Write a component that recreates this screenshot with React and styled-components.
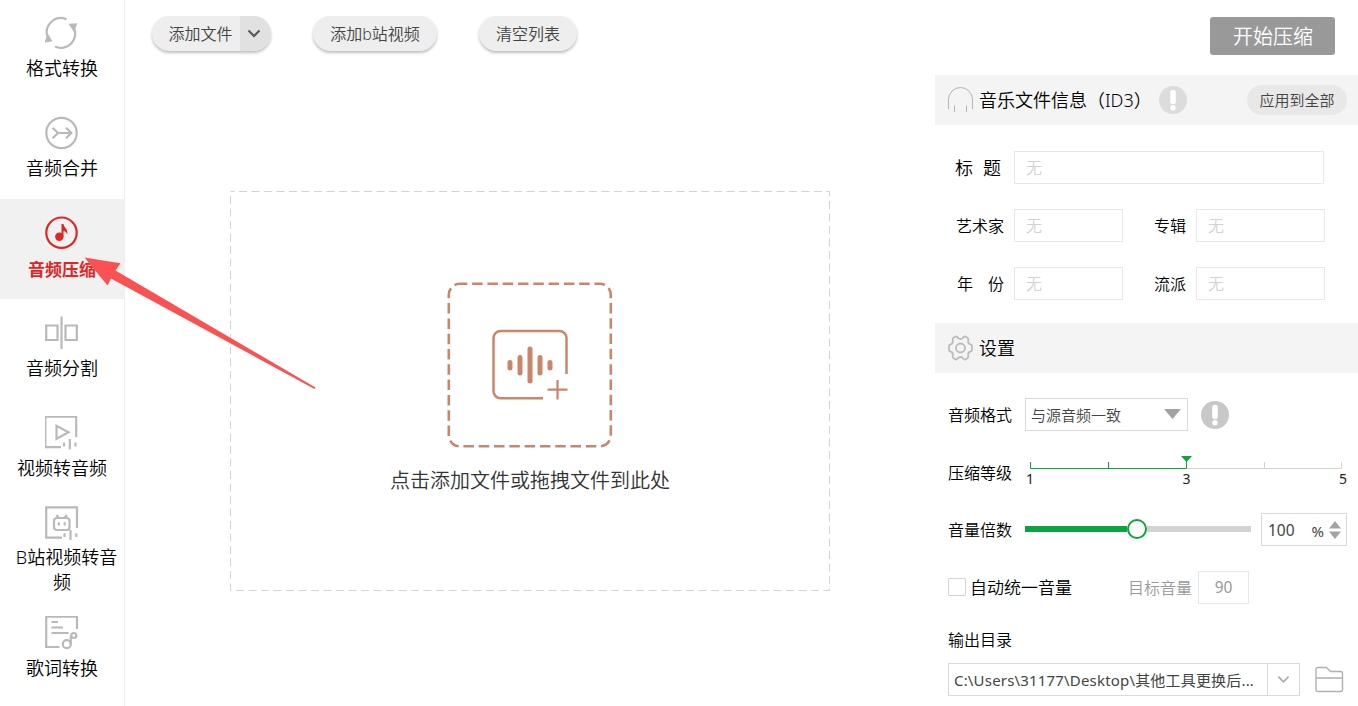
import styled, { createGlobalStyle, css } from "styled-components";

const GlobalStyle = createGlobalStyle`
  * {
    box-sizing: border-box;
  }

  body {
    margin: 0;
    background: #fff;
    color: #000;
    font-family: "Noto Sans", "Noto Sans CJK SC", sans-serif;
    font-weight: 350;
    overflow: hidden;
  }

  svg {
    display: block;
    flex: none;
  }
`;

const Window = styled.div`
  position: relative;
  display: flex;
  width: 1358px;
  height: 706px;
  overflow: hidden;
`;

const Sidebar = styled.nav`
  flex: none;
  width: 125px;
  height: 707px;
  margin-top: -1px;
  border-right: 1px solid #eee;
`;

const NavItem = styled.div`
  display: flex;
  flex-direction: column;
  align-items: center;
  height: 100px;
  padding-top: ${({ $tall }) => ($tall ? 7 : 17)}px;
  gap: ${({ $tall, $active }) => ($tall ? 5 : $active ? 8 : 6)}px;
  color: ${({ $active }) => ($active ? "#dd2626" : "#b9b9b9")};
  background: ${({ $active }) => ($active ? "#f1f1f1" : "transparent")};
`;

const NavLabel = styled.span`
  display: flex;
  flex-direction: column;
  align-items: center;
  color: #000;
  font-size: 18px;
  line-height: ${({ $tall }) => ($tall ? 25 : 24)}px;
  white-space: nowrap;

  ${({ $active }) =>
    $active &&
    css`
      color: #dd2626;
      font-size: 17px;
      font-weight: 700;
    `}
`;

const FirstLine = styled.span`
  padding-left: 9px;
`;

const Main = styled.main`
  flex: none;
  width: 810px;
  padding: 16px 0 0 27px;
`;

const Toolbar = styled.div`
  display: flex;
  align-items: flex-start;
  gap: 42px;
  height: 175px;
`;

const ToolButton = styled.button`
  display: flex;
  align-items: center;
  justify-content: center;
  width: ${({ $width }) => $width}px;
  height: 35px;
  margin: 0;
  padding: 0 0 2px;
  border: 0;
  border-radius: 18px;
  background: #eee;
  box-shadow: 0 2px 3px rgba(0, 0, 0, 0.25);
  color: #444;
  font: inherit;
  font-size: 16px;
  overflow: hidden;
`;

const SplitButton = styled(ToolButton)`
  padding: 0;
`;

const SplitMain = styled.span`
  width: 88px;
  padding: 0 0 1px 9px;
`;

const SplitArrow = styled.span`
  display: flex;
  align-items: center;
  justify-content: center;
  width: 31px;
  height: 100%;
  padding-right: 3px;
  background: #e1e1e1;
`;

const DropZone = styled.section`
  position: relative;
  display: flex;
  flex-direction: column;
  align-items: center;
  width: 600px;
  height: 400px;
  margin-left: 78px;
  padding-top: 91px;
`;

const DropFrame = styled.svg`
  position: absolute;
  inset: 0;
`;

const DropText = styled.p`
  margin: 18px 0 0;
  color: #333;
  font-size: 20px;
  line-height: 30px;
`;

const Panel = styled.aside`
  flex: none;
  width: 423px;
`;

const PanelTop = styled.div`
  display: flex;
  justify-content: flex-end;
  height: 75px;
  padding: 17px 23px 0 0;
`;

const StartButton = styled.button`
  width: 125px;
  height: 38px;
  padding: 0 0 1px 1px;
  border: 0;
  border-radius: 3px;
  background: #999;
  color: #fff;
  font: inherit;
  font-size: 20px;
`;

const SectionHeader = styled.header`
  display: flex;
  align-items: center;
  height: 50px;
  padding: 0 11px 0 13px;
  background: #f4f4f4;
`;

const SectionTitle = styled.h2`
  min-width: 180px;
  margin: 0 0 0 6px;
  font-size: 18px;
  font-weight: inherit;
  line-height: 26px;
  white-space: nowrap;
`;

const ApplyButton = styled.button`
  width: 100px;
  height: 30px;
  margin-left: auto;
  padding: 0 0 2px;
  border: 0;
  border-radius: 15px;
  background: #e8e8e8;
  color: #444;
  font: inherit;
  font-size: 15px;
`;

const InfoForm = styled.div`
  display: flex;
  flex-direction: column;
  gap: 25px;
  height: 198px;
  padding: 26px 0 0 20px;
`;

const FormRow = styled.div`
  display: flex;
  align-items: center;
`;

const FieldLabel = styled.label`
  display: flex;
  justify-content: space-between;
  width: ${({ $width }) => $width}px;
  margin: 0 ${({ $gap }) => $gap}px 0 ${({ $left }) => $left || 0}px;
  font-size: ${({ $size }) => $size || 16}px;
  line-height: 24px;
  white-space: nowrap;
`;

const Field = styled.div`
  display: flex;
  align-items: center;
  width: ${({ $width }) => $width}px;
  height: 33px;
  padding: 0 0 1px 11px;
  border: 1px solid #e8e8e8;
  color: #d2d2d2;
  font-size: 16px;
`;

const Settings = styled.div`
  padding: 25px 0 0 13px;
`;

const SettingRow = styled.div`
  display: flex;
  align-items: center;
  height: 33px;
  margin-bottom: ${({ $after }) => $after}px;
`;

const SettingLabel = styled.span`
  width: 77px;
  font-size: 16px;
  line-height: 24px;
`;

const Select = styled.div`
  display: flex;
  align-items: center;
  justify-content: space-between;
  width: 163px;
  height: 33px;
  margin-right: 13px;
  padding: 0 6px 1px 5px;
  border: 1px solid #d9d9d9;
  color: #444;
  font-size: 15px;
`;

const Scale = styled.div`
  width: 324px;
  height: 34px;
`;

const ScaleNumbers = styled.div`
  display: flex;
  justify-content: space-between;
  width: 321px;
  margin: -1px 0 0 1px;
  color: #222;
  font-size: 14px;
  font-weight: 400;
  line-height: 19px;
`;

const Track = styled.div`
  display: flex;
  align-items: center;
  width: 226px;
  height: 20px;
  margin: -2px 10px 0 0;
`;

const TrackPart = styled.div`
  height: 6px;
  background: ${({ $on }) => ($on ? "#0ba43f" : "#d2d2d2")};
`;

const Knob = styled.div`
  flex: none;
  width: 20px;
  height: 20px;
  border: 2px solid #0ba43f;
  border-radius: 50%;
  background: #fff;
`;

const NumberBox = styled.div`
  display: flex;
  align-items: center;
  width: 86px;
  height: 33px;
  padding: 0 5px 0 6px;
  border: 1px solid #d9d9d9;
  color: #444;
  font-size: 15.5px;
  font-weight: 400;
`;

const Percent = styled.span`
  margin: 2px 5px 0 auto;
  font-size: 15px;
`;

const Checkbox = styled.span`
  width: 18px;
  height: 18px;
  margin: -2px 4px 0 0;
  border: 1px solid #d4d4d4;
  border-radius: 1px;
`;

const CheckLabel = styled.span`
  width: 158px;
  padding-bottom: 2px;
  font-size: 17px;
`;

const TargetLabel = styled.span`
  width: 70px;
  padding-bottom: 1px;
  color: #999;
  font-size: 16px;
`;

const TargetBox = styled.div`
  width: 51px;
  height: 33px;
  border: 1px solid #e8e8e8;
  color: #999;
  font-size: 15.5px;
  font-weight: 400;
  line-height: 31px;
  text-align: center;
`;

const OutputLabel = styled.div`
  height: 35px;
  font-size: 16px;
  line-height: 24px;
`;

const PathBox = styled.div`
  display: flex;
  width: 352px;
  height: 33px;
  margin-right: 15px;
  border: 1px solid #d9d9d9;
`;

const PathText = styled.span`
  width: 318px;
  padding-left: 5px;
  color: #444;
  font-size: 15px;
  font-weight: 400;
  letter-spacing: 0.18px;
  line-height: 33px;
  white-space: nowrap;
`;

const PathArrow = styled.span`
  display: flex;
  flex: 1;
  align-items: center;
  justify-content: center;
  border-left: 1px solid #d9d9d9;
`;

const Pointer = styled.svg`
  position: absolute;
  left: 80px;
  top: 250px;
`;

const NavIcon = ({ children }) => (
  <svg width="34" height="34" viewBox="0 0 34 34" fill="none" stroke="currentColor" strokeWidth="2.2">
    {children}
  </svg>
);

const ConvertIcon = () => (
  <NavIcon>
    <path d="M21.5 3.2A14.3 14.3 0 0 0 2.5 21" />
    <path d="M10 30.5A14.3 14.3 0 0 0 28.700 11" />
    <path d="M3 19L0 26L6.5 24.800ZM24.500 8.300L31.500 8L28.800 14.500Z" fill="currentColor" strokeWidth="1.200" />
  </NavIcon>
);

const MergeIcon = () => (
  <NavIcon>
    <circle cx="16.5" cy="17" r="15.2" />
    <path d="M7.5 11.8L13 17L7.5 22.2M13 17H26M21 11.8L26.3 17L21 22.2" />
  </NavIcon>
);

const CompressIcon = () => (
  <NavIcon>
    <circle cx="16.5" cy="16.7" r="15.2" />
    <circle cx="14.3" cy="20.8" r="4.2" fill="currentColor" stroke="none" />
    <path d="M16.500 21V8H18.500C18.800 12 23.300 12.500 22.300 18.500C21.500 16 20 15.300 18.500 15V21Z" fill="currentColor" stroke="none" />
  </NavIcon>
);

const SplitIcon = () => (
  <NavIcon>
    <path d="M1.2 9.5H12.5V24H1.2ZM20.5 9.5H31.8V24H20.5ZM16.5 0.5V33" />
  </NavIcon>
);

const Bars = () => <path d="M19.5 27.3V31M25.5 24V34M31.3 27.3V31" />;

const VideoIcon = () => (
  <NavIcon>
    <path d="M16 31.200H0.300V0.700H31.200V21" />
    <path d="M11.500 9.800V22.800L23.500 16.300Z" />
    <path d="M19 26.500V30.500M24.800 23V33.500M30.500 26.500V30.500" />
  </NavIcon>
);

const BiliIcon = () => (
  <NavIcon>
    <path d="M17 31.700H1.200V1.400H32V22" />
    <rect x="9" y="12" width="15.5" height="12" rx="3" />
    <path d="M11.5 9L14 12M22 9L19.5 12M13.8 16.3V19.5M19.7 16.3V19.5" />
    <Bars />
  </NavIcon>
);

const LyricIcon = () => (
  <NavIcon>
    <path d="M14.5 31H1.2V0.700H32V13" />
    <path d="M6.500 6H13M6.500 11.500H18M6.500 17H23.500" />
    <circle cx="21.8" cy="28.200" r="4" />
    <path d="M25.8 28.200V19.500" />
    <circle cx="28.800" cy="19.500" r="2.500" />
  </NavIcon>
);

const InfoIcon = ({ color }) => (
  <svg width="28" height="28" viewBox="0 0 28 28">
    <circle cx="14" cy="14" r="14" fill={color} />
    <rect x="11.2" y="3.800" width="5.600" height="14.500" rx="2.800" fill="#fff" />
    <circle cx="14" cy="21.8" r="2.700" fill="#fff" />
  </svg>
);

const Chevron = ({ color, width = 14, stroke = 2 }) => (
  <svg width={width} height="9" viewBox="0 0 14 9" fill="none" stroke={color} strokeWidth={stroke}>
    <path d="M1.5 1.5L7 7L12.5 1.5" />
  </svg>
);

const UploadIcon = () => (
  <svg width="166" height="166" viewBox="0 0 166 166" fill="none" stroke="#c9866b" strokeWidth="2.6">
    <rect x="1.8" y="1.8" width="162" height="162.5" rx="11" strokeDasharray="10.5 4.8" strokeDashoffset="3" />
    <path d="M119.5 92V56a7 7 0 0 0-7-7H53.5a7 7 0 0 0-7 7V109.3a7 7 0 0 0 7 7H96" strokeWidth="2.5" />
    <path d="M110.5 98V117.5M100.5 107.7H120.5" strokeWidth="2.2" />
    <path d="M63 80.5V86M73 75.5V91M83 67V99M93 75.5V91M103 80.5V86" strokeWidth="5" strokeLinecap="round" />
  </svg>
);

const navItems = [
  { label: "格式转换", Icon: ConvertIcon },
  { label: "音频合并", Icon: MergeIcon },
  { label: "音频压缩", Icon: CompressIcon, active: true },
  { label: "音频分割", Icon: SplitIcon },
  { label: "视频转音频", Icon: VideoIcon },
  { label: "B站视频转音", rest: "频", Icon: BiliIcon },
  { label: "歌词转换", Icon: LyricIcon },
];

export default function App() {
  return (
    <Window>
      <GlobalStyle />
      <Sidebar>
        {navItems.map(({ label, rest, Icon, active }) => (
          <NavItem key={label} $active={active} $tall={!!rest}>
            <Icon />
            <NavLabel $active={active} $tall={!!rest}>
              {rest ? <FirstLine>{label}</FirstLine> : label}
              {rest && <span>{rest}</span>}
            </NavLabel>
          </NavItem>
        ))}
      </Sidebar>

      <Main>
        <Toolbar>
          <SplitButton $width={119}>
            <SplitMain>添加文件</SplitMain>
            <SplitArrow>
              <Chevron color="#555" />
            </SplitArrow>
          </SplitButton>
          <ToolButton $width={124}>添加b站视频</ToolButton>
          <ToolButton $width={98}>清空列表</ToolButton>
        </Toolbar>
        <DropZone>
          <DropFrame width="600" height="400">
            <rect x="0.5" y="0.5" width="599" height="399" fill="none" stroke="#d4d4d4" strokeDasharray="8 4.5" strokeDashoffset="4" />
          </DropFrame>
          <UploadIcon />
          <DropText>点击添加文件或拖拽文件到此处</DropText>
        </DropZone>
      </Main>

      <Panel>
        <PanelTop>
          <StartButton>开始压缩</StartButton>
        </PanelTop>
        <SectionHeader>
          <svg width="25" height="26" viewBox="0 0 25 26" fill="none" stroke="#b4b4b4">
            <path d="M0.5 22V12.5a12 12 0 0 1 24 0V22M6.5 18.5V25M18.5 18.5V25" />
          </svg>
          <SectionTitle>音乐文件信息（ID3）</SectionTitle>
          <InfoIcon color="#dcdcdc" />
          <ApplyButton>应用到全部</ApplyButton>
        </SectionHeader>
        <InfoForm>
          <FormRow>
            <FieldLabel $width={46} $gap={13} $size={18}>
              <span>标</span>
              <span>题</span>
            </FieldLabel>
            <Field $width={310}>无</Field>
          </FormRow>
          <FormRow>
            <FieldLabel $width={48} $gap={10} $left={1}>艺术家</FieldLabel>
            <Field $width={109}>无</Field>
            <FieldLabel $width={32} $gap={10} $left={31}>专辑</FieldLabel>
            <Field $width={129}>无</Field>
          </FormRow>
          <FormRow>
            <FieldLabel $width={47} $gap={10} $left={2}>
              <span>年</span>
              <span>份</span>
            </FieldLabel>
            <Field $width={109}>无</Field>
            <FieldLabel $width={32} $gap={10} $left={31}>流派</FieldLabel>
            <Field $width={129}>无</Field>
          </FormRow>
        </InfoForm>
        <SectionHeader>
          <svg width="25" height="26" viewBox="0 0 25 26" fill="none" stroke="#bcbcbc" strokeWidth="1.8" strokeLinejoin="round">
            <path d="M7.7 1.5Q9.2 1.3 10 2.8Q12.5 5.2 15 2.8Q15.8 1.3 17.3 1.5L19.5 2.8Q20.8 3.8 20.2 5.5Q19.7 8.7 22.5 9.3Q24 9.8 24 11.5V14.5Q24 16.2 22.5 16.7Q19.7 17.3 20.2 20.5Q20.8 22.2 19.5 23.2L17.3 24.5Q15.8 24.7 15 23.2Q12.5 20.8 10 23.2Q9.2 24.7 7.7 24.5L5.5 23.2Q4.2 22.2 4.8 20.5Q5.3 17.3 2.5 16.7Q1 16.2 1 14.5V11.5Q1 9.8 2.5 9.3Q5.3 8.7 4.8 5.5Q4.2 3.8 5.5 2.8Z" />
            <circle cx="12.5" cy="13" r="4.5" />
          </svg>
          <SectionTitle>设置</SectionTitle>
        </SectionHeader>
        <Settings>
          <SettingRow $after={25}>
            <SettingLabel>音频格式</SettingLabel>
            <Select>
              与源音频一致
              <svg width="17" height="10" viewBox="0 0 17 10">
                <path d="M0 0H17L8.5 10Z" fill="#a3a3a3" />
              </svg>
            </Select>
            <InfoIcon color="#c8c8c8" />
          </SettingRow>
          <SettingRow $after={24}>
            <SettingLabel>压缩等级</SettingLabel>
            <Scale>
              <svg width="324" height="14" viewBox="0 0 324 14" fill="none">
                <path d="M161 12.5H316.5V6M239.5 6V12" stroke="#d4d4d4" />
                <path d="M5.5 6V12.5H161.5V4M83.5 6V12" stroke="#0ba43f" />
                <path d="M156 0H167L161.5 6Z" fill="#0ba43f" />
              </svg>
              <ScaleNumbers>
                <span>1</span>
                <span>3</span>
                <span>5</span>
              </ScaleNumbers>
            </Scale>
          </SettingRow>
          <SettingRow $after={25}>
            <SettingLabel>音量倍数</SettingLabel>
            <Track>
              <TrackPart $on style={{ width: 102 }} />
              <Knob />
              <TrackPart style={{ width: 104 }} />
            </Track>
            <NumberBox>
              100
              <Percent>%</Percent>
              <svg width="12" height="20" viewBox="0 0 12 20" fill="#a3a3a3">
                <path d="M0 8.5L6 1L12 8.5ZM0 11.5H12L6 19Z" />
              </svg>
            </NumberBox>
          </SettingRow>
          <SettingRow $after={24}>
            <Checkbox />
            <CheckLabel>自动统一音量</CheckLabel>
            <TargetLabel>目标音量</TargetLabel>
            <TargetBox>90</TargetBox>
          </SettingRow>
          <OutputLabel>输出目录</OutputLabel>
          <SettingRow $after={0}>
            <PathBox>
              <PathText>C:\Users\31177\Desktop\其他工具更换后...</PathText>
              <PathArrow>
                <Chevron color="#aaa" width={13} stroke={1.8} />
              </PathArrow>
            </PathBox>
            <svg width="29" height="27" viewBox="0 0 29 27" fill="none" stroke="#b0b0b0" strokeWidth="1.4">
              <path d="M1 23.5V3.5a2 2 0 0 1 2-2H11.5L15.5 5.5H25.5a2 2 0 0 1 2 2V23.5a2 2 0 0 1-2 2H3a2 2 0 0 1-2-2ZM1 12H27.5" />
            </svg>
          </SettingRow>
        </Settings>
      </Panel>

      <Pointer width="240" height="145" viewBox="0 0 240 145">
        <path d="M4.5 7.5L40.5 13.3L35.5 20.5L235.5 137.5L234.5 139L31 28.5L27.5 35.5Z" fill="#fa5252" />
      </Pointer>
    </Window>
  );
}
